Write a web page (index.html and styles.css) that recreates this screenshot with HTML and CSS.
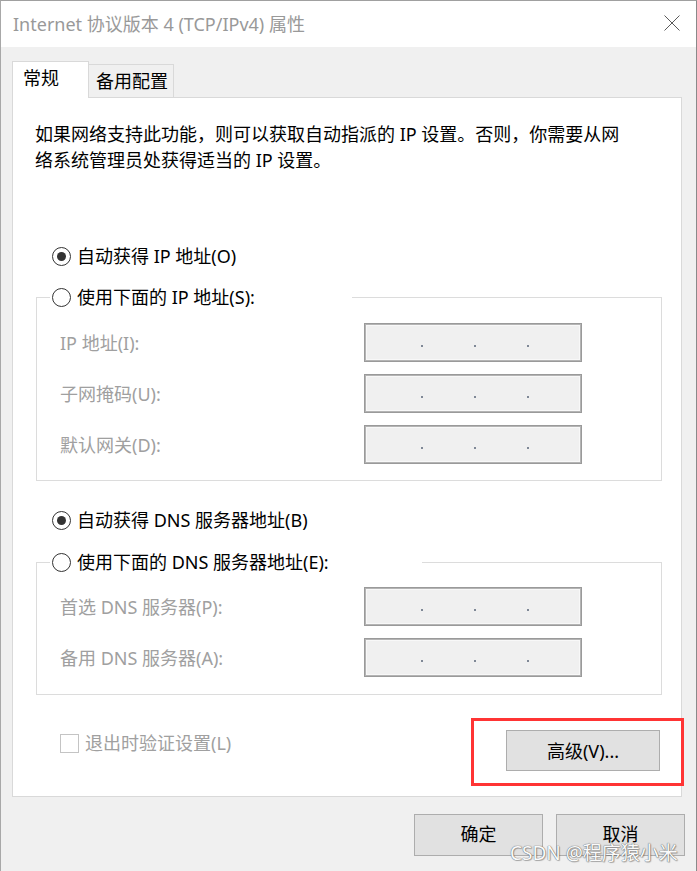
FILE: index.html
```html
<!DOCTYPE html>
<html lang="zh-CN">
<head>
<meta charset="utf-8">
<title>Internet 协议版本 4 (TCP/IPv4) 属性</title>
<link rel="stylesheet" href="styles.css">
</head>
<body>
<div class="window">
  <div class="titlebar">
    <span class="title">Internet 协议版本 4 (TCP/IPv4) 属性</span>
    <span class="close">
      <svg width="16" height="16" viewBox="0 0 16 16"><path d="M0.5 0.5 L15.5 15.5 M15.5 0.5 L0.5 15.5" stroke="#5a5a5a" stroke-width="1" fill="none"/></svg>
    </span>
  </div>
  <div class="client">
    <div class="tabs">
      <div class="tab tab-active">常规</div>
      <div class="tab tab-inactive">备用配置</div>
    </div>
    <div class="panel">
      <p class="intro">如果网络支持此功能，则可以获取自动指派的 IP 设置。否则，你需要从网<br>络系统管理员处获得适当的 IP 设置。</p>

      <div class="radio-row row-auto-ip"><span class="radio checked"></span><span>自动获得 IP 地址(O)</span></div>

      <fieldset class="group group-ip">
        <legend class="legend legend-ip"><span class="radio"></span><span>使用下面的 IP 地址(S):</span></legend>
        <div class="field-row"><span class="field-label">IP 地址(I):</span><span class="ipbox"><i></i><i></i><i></i></span></div>
        <div class="field-row"><span class="field-label">子网掩码(U):</span><span class="ipbox"><i></i><i></i><i></i></span></div>
        <div class="field-row"><span class="field-label">默认网关(D):</span><span class="ipbox"><i></i><i></i><i></i></span></div>
      </fieldset>

      <div class="radio-row row-auto-dns"><span class="radio checked"></span><span>自动获得 DNS 服务器地址(B)</span></div>

      <fieldset class="group group-dns">
        <legend class="legend legend-dns"><span class="radio"></span><span>使用下面的 DNS 服务器地址(E):</span></legend>
        <div class="field-row"><span class="field-label">首选 DNS 服务器(P):</span><span class="ipbox"><i></i><i></i><i></i></span></div>
        <div class="field-row"><span class="field-label">备用 DNS 服务器(A):</span><span class="ipbox"><i></i><i></i><i></i></span></div>
      </fieldset>

      <div class="bottom-row">
        <div class="check"><span class="checkbox"></span><span>退出时验证设置(L)</span></div>
        <button class="btn btn-adv">高级(V)...</button>
      </div>
    </div>
    <div class="dialog-buttons">
      <button class="btn btn-dlg">确定</button>
      <button class="btn btn-dlg">取消</button>
    </div>
  </div>
  <div class="highlight"></div>
  <div class="watermark">CSDN @程序猿小米</div>
</div>
</body>
</html>
```

FILE: styles.css
```css
* { box-sizing: border-box; }

html, body {
  margin: 0;
  padding: 0;
  background: #f0f0f0;
}

body {
  font-family: "Noto Sans", "Noto Sans CJK SC", sans-serif;
  font-size: 18px;
  color: #000;
}

.window {
  position: relative;
  width: 697px;
  height: 871px;
  border-left: 1px solid #a8a8a8;
  border-right: 1px solid #8a8a8a;
  border-top: 1px solid #a0a0a0;
  background: #f0f0f0;
  overflow: hidden;
}

.titlebar {
  height: 46px;
  background: #fff;
  display: flex;
  align-items: center;
  justify-content: space-between;
  padding-left: 12px;
  padding-right: 16px;
}

.title {
  color: #999;
  font-size: 18px;
  line-height: 26px;
  white-space: nowrap;
  margin-top: -1px;
}

.close {
  display: flex;
  width: 16px;
  height: 16px;
  margin-top: -2px;
}

.client {
  padding: 14px 11px 0 11px;
}

.tabs {
  display: flex;
  align-items: flex-end;
  height: 36px;
}

.tab {
  line-height: 26px;
  white-space: nowrap;
  border-top: 1px solid #d9d9d9;
  border-right: 1px solid #d9d9d9;
}

.tab-active {
  position: relative;
  z-index: 1;
  width: 77px;
  height: 37px;
  margin-bottom: -1px;
  background: #fff;
  border-left: 1px solid #d9d9d9;
  padding: 3px 0 0 10px;
}

.tab-inactive {
  width: 85px;
  height: 33px;
  background: #f0f0f0;
  padding: 3px 0 0 7px;
}

.panel {
  width: 670px;
  height: 700px;
  background: #fff;
  border: 1px solid #d9d9d9;
  padding: 23px 0 0 22px;
}

.intro {
  margin: 0;
  line-height: 26px;
  white-space: nowrap;
}

.radio-row {
  display: flex;
  align-items: center;
  height: 26px;
  line-height: 26px;
  padding-left: 17px;
  white-space: nowrap;
}

.row-auto-ip { margin-top: 70px; }
.row-auto-dns { margin-top: 26px; }

.radio {
  position: relative;
  flex: none;
  width: 19px;
  height: 19px;
  border: 1px solid #333;
  border-radius: 50%;
  background: #fff;
  margin-right: 6px;
}

.radio.checked::after {
  content: "";
  position: absolute;
  left: 4px;
  top: 4px;
  width: 9px;
  height: 9px;
  border-radius: 50%;
  background: #333;
}

.group {
  width: 626px;
  margin: 0 0 0 1px;
  border: 1px solid #dcdcdc;
  padding: 0;
  min-inline-size: 0;
}

.group-ip { margin-top: 15px; padding-top: 13px; padding-bottom: 16px; }
.group-dns { margin-top: 16px; padding-top: 12px; padding-bottom: 17px; }

.legend {
  display: flex;
  align-items: center;
  height: 26px;
  line-height: 26px;
  margin-left: 13px;
  padding: 0 0 0 2px;
  background: #fff;
  white-space: nowrap;
}

.legend-ip { width: 302px; }
.legend-dns { width: 372px; }

.field-row {
  display: flex;
  align-items: center;
  height: 39px;
  padding-left: 23px;
}

.field-row + .field-row { margin-top: 12px; }

.field-label {
  width: 304px;
  color: #a0a0a0;
  white-space: nowrap;
  line-height: 26px;
}

.ipbox {
  display: flex;
  align-items: center;
  width: 218px;
  height: 39px;
  background: #f0f0f0;
  border: 1px solid #9a9a9a;
  box-shadow: inset 0 0 0 1px #b4b4b4, inset 0 0 0 2px #f8f8f8;
  padding: 7px 0 0 56px;
  gap: 51px;
}

.ipbox i {
  display: block;
  width: 2px;
  height: 2px;
  background: #7f8896;
}

.bottom-row {
  display: flex;
  justify-content: space-between;
  align-items: flex-start;
  margin-top: 35px;
  padding-right: 22px;
  width: 647px;
}

.check {
  display: flex;
  align-items: center;
  height: 26px;
  line-height: 26px;
  padding-left: 25px;
  color: #a0a0a0;
  white-space: nowrap;
}

.checkbox {
  width: 19px;
  height: 19px;
  border: 1px solid #c4c4c4;
  background: #fff;
  margin-right: 6px;
}

.btn {
  font-family: "Noto Sans", "Noto Sans CJK SC", sans-serif;
  font-size: 18px;
  color: #000;
  background: #e1e1e1;
  border: 1px solid #adadad;
  padding: 0;
  line-height: 20px;
  white-space: nowrap;
}

.btn-adv {
  width: 154px;
  height: 41px;
}

.dialog-buttons {
  display: flex;
  justify-content: flex-end;
  gap: 13px;
  margin-top: 17px;
}

.btn-dlg {
  width: 129px;
  height: 42px;
  padding-bottom: 3px;
}

.highlight {
  position: absolute;
  left: 470px;
  top: 717px;
  width: 213px;
  height: 68px;
  border: 3px solid #ff3434;
}

.watermark {
  position: absolute;
  left: 509px;
  top: 843px;
  font-size: 19px;
  line-height: 19px;
  color: #fafafa;
  white-space: nowrap;
  text-shadow: 0 0 1px #6a6a6a, 0 0 1px #6a6a6a, 1px 1px 1px rgba(0,0,0,0.25);
}
```
